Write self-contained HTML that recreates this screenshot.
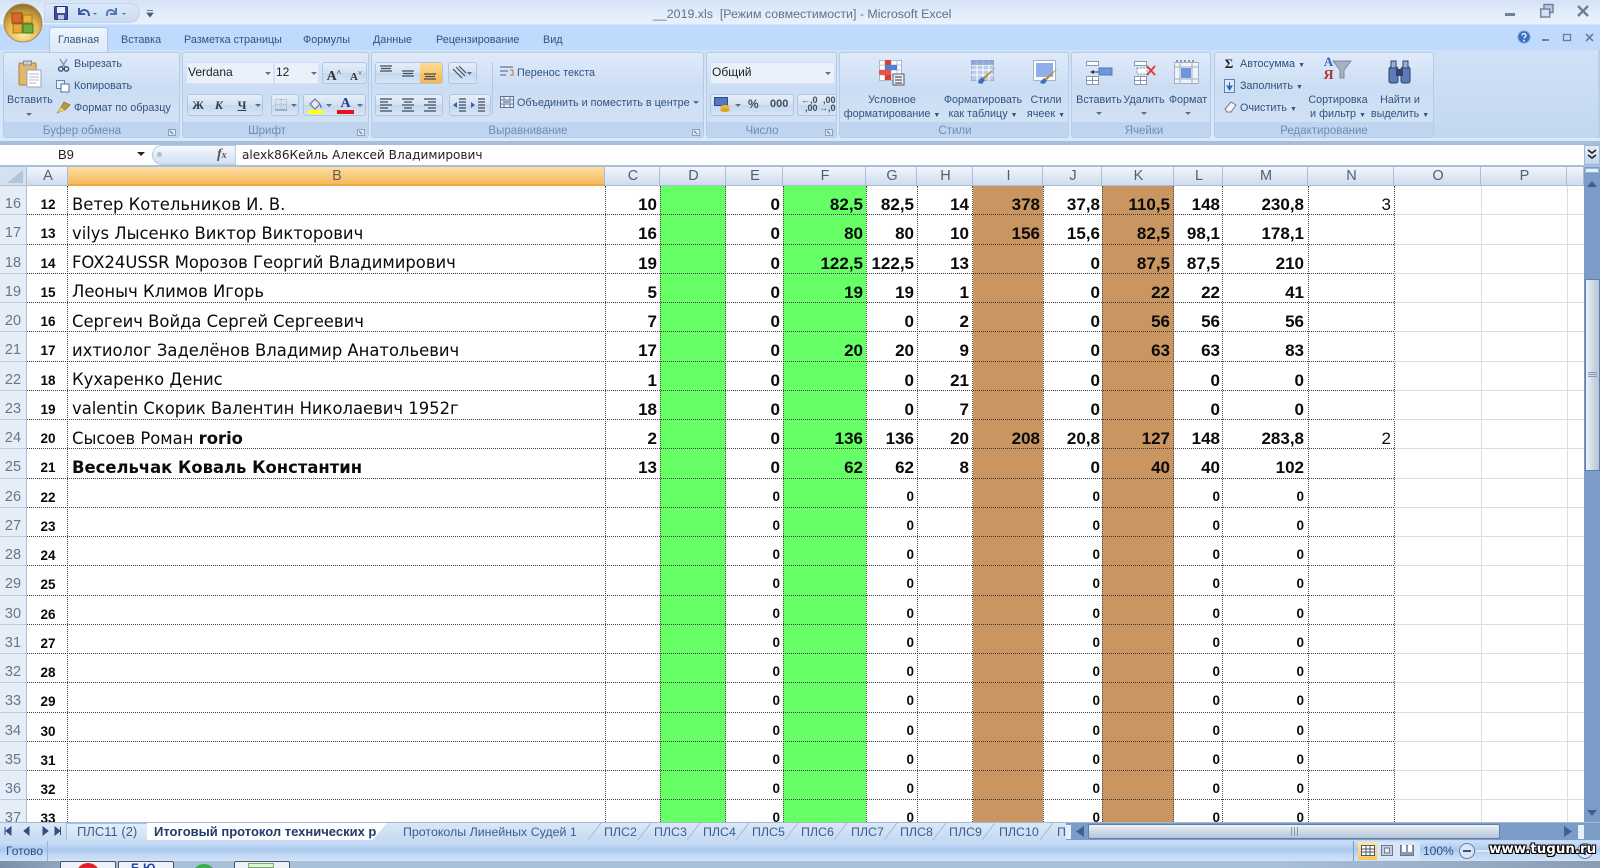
<!DOCTYPE html>
<html lang="ru"><head><meta charset="utf-8"><title>Microsoft Excel</title>
<style>
html,body{margin:0;padding:0;width:1600px;height:868px;overflow:hidden;background:#fff}
#w{position:absolute;left:0;top:0;width:1600px;height:868px;overflow:hidden;filter:blur(.35px);font-family:"Liberation Sans",sans-serif}
.t{position:absolute;white-space:nowrap;font-size:10.8px;line-height:14px;color:#33527f}
.c{transform:translateX(-50%)}
.lb{color:#6d8db8;font-size:11.5px;top:124px}
.g{position:absolute;top:52px;height:86px;box-sizing:border-box;border:1px solid #b4cbe6;border-radius:3px;background:linear-gradient(#dfeafa 0,#d3e3f6 25%,#cbddf3 40%,#d2e2f5 85%,#d2e2f5 86%)}
.g:after{content:"";position:absolute;left:0;right:0;bottom:0;height:15px;background:#bfd5ef}
.b{position:absolute;box-sizing:border-box;border:1px solid #aec6e2;border-radius:3px;background:linear-gradient(#e6eef9,#d3e1f3 50%,#c6d8ef 51%,#d6e4f5)}
.w{position:absolute;box-sizing:border-box;background:#eaf1fb;border:1px solid #d3e1f2}
svg{position:absolute;overflow:visible}
.gly{position:absolute;font-weight:bold;color:#2a3a55;text-align:center;line-height:20px;font-size:13px}
.ch{position:absolute;top:167px;height:19px;box-sizing:border-box;padding-left:2px;border-right:1px solid #a9bfd9;background:linear-gradient(#f3f6fb,#dde6f2 60%,#cfdcec);text-align:center;color:#4f5e74;font-size:14.5px;line-height:19px;border-bottom:1px solid #a9bfd9}
#grid{position:absolute;left:0;top:186px;width:1584px;height:636px;overflow:hidden;background:#fff}
.st{position:absolute;top:0;height:636px}
.v{position:absolute;top:0;height:636px;border-left:1px dotted #4d4d4d}
.l{position:absolute;top:0;height:636px;border-left:1px solid #d6deea}
.r{position:absolute;left:0;width:1584px;height:29.25px;font-weight:bold;color:#0a0a0a;font-size:17px;line-height:37px}
.r:before{content:"";position:absolute;left:27px;width:1367px;bottom:0;border-bottom:1px dotted #3c3c3c}
.r:after{content:"";position:absolute;left:1394px;width:190px;bottom:0;border-bottom:1px solid #d6deea}
.r i{position:absolute;font-style:normal;top:0;white-space:nowrap}
.r u{position:absolute;left:0;top:0;width:27px;height:29.25px;box-sizing:border-box;background:#e6edf7;border-right:1px solid #a9bfd9;border-bottom:1px solid #b8cce2;text-decoration:none;text-align:center;font-weight:normal;font-size:14.5px;color:#66768c;line-height:37px}
.r s{position:absolute;left:28px;width:40px;text-align:center;text-decoration:none;font-size:13.5px;top:0}
.r em{position:absolute;left:72px;font-style:normal;font-family:"DejaVu Sans",sans-serif;font-weight:normal;font-size:16.4px;top:-.5px;white-space:nowrap}
.r em b{font-weight:bold}
.C{right:927px}.E{right:804px}.F{right:721px}.G{right:670px}.H{right:615px}.I{right:544px}.J{right:484px}.K{right:414px}.L{right:364px}.M{right:280px}.N{right:193px}
.z i{font-size:13.5px;top:-1px}
.tab{position:absolute;top:824px;font-size:12.4px;line-height:16px;color:#3a5d90;white-space:nowrap}
</style></head><body><div id="w">

<!-- title bar -->
<div style="position:absolute;left:0;top:0;width:1600px;height:24px;background:linear-gradient(#d3e2f6,#e4eefa 60%,#e9f1fb)"></div>
<div style="position:absolute;left:0;top:24px;width:1600px;height:28px;background:#bfdafc;border-top:1px solid #d2e6fb;box-sizing:border-box"></div>
<div style="position:absolute;left:0;top:50px;width:1600px;height:94px;background:linear-gradient(#cfe1f7,#dbe8f8)"></div>
<div style="position:absolute;left:0;top:141px;width:1600px;height:4px;background:#a7bfdc"></div>
<div style="position:absolute;left:44px;top:3px;width:96px;height:20px;border-radius:0 12px 12px 0;background:linear-gradient(#dce8f8,#c9dcf3);border:1px solid #c3d6ee;box-sizing:border-box"></div>
<svg style="left:3px;top:3px" width="40" height="40" viewBox="0 0 40 40"><defs><radialGradient id="o" cx=".5" cy=".75" r=".75"><stop offset="0" stop-color="#fff3b0"/><stop offset=".55" stop-color="#e6b54a"/><stop offset="1" stop-color="#8c6a2a"/></radialGradient></defs><circle cx="20" cy="20" r="19" fill="url(#o)" stroke="#9b8a5c"/><rect x="9" y="10" width="10" height="10" fill="#d8682a" stroke="#a63f12"/><rect x="20" y="12" width="9" height="8" fill="#e9b53c" stroke="#a07a1c"/><rect x="10" y="21" width="9" height="9" fill="#e8a73a" stroke="#a07a1c"/><rect x="20" y="21" width="10" height="9" fill="#6fae3f" stroke="#3f7a1c"/></svg>
<svg style="left:54px;top:6px" width="14" height="14" viewBox="0 0 14 14"><rect x=".5" y=".5" width="13" height="13" rx="1" fill="#3f4f9a" stroke="#2a3370"/><rect x="3" y="1" width="8" height="6" fill="#e8eefa"/><rect x="4" y="9" width="6" height="4.5" fill="#bcc5de"/></svg>
<svg style="left:76px;top:5px" width="60" height="16" viewBox="0 0 60 16" fill="none"><path d="M3 3v6h6M3 9c3-6 10-5 10 2" stroke="#3b5aa8" stroke-width="2"/><path d="M17 8l2 2 2-2z" fill="#5a6f8e"/><path d="M40 3v6h-6M40 9c-3-6-10-5-9 2" stroke="#3b5aa8" stroke-width="2" opacity=".8"/><path d="M46 8l2 2 2-2z" fill="#5a6f8e"/></svg>
<svg style="left:146px;top:9px" width="8" height="9"><path d="M1 1.5h6M1 4h6l-3 4z" fill="#4a5a70" stroke="#4a5a70" stroke-width=".8"/></svg>
<div class="t" style="left:653px;top:7px;font-size:12.4px;color:#5f7190">__2019.xls&nbsp; [Режим совместимости] - Microsoft Excel</div>
<div style="position:absolute;left:1505px;top:13px;width:10px;height:3px;background:#6d7f99"></div>
<svg style="left:1540px;top:4px" width="14" height="14"><rect x="4" y=".5" width="9" height="8" fill="#b9cbe2" stroke="#6d7f99" stroke-width="1.4"/><rect x=".7" y="5" width="9" height="8" fill="#d4e1f1" stroke="#6d7f99" stroke-width="1.4"/></svg>
<svg style="left:1577px;top:5px" width="12" height="12"><path d="M1 1l10 10M11 1L1 11" stroke="#6d7f99" stroke-width="2.4"/></svg>

<!-- tabs -->
<div style="position:absolute;left:49px;top:27px;width:59px;height:26px;box-sizing:border-box;background:linear-gradient(#eef5fd,#dbe8f8);border:1px solid #a9c5e6;border-bottom:0;border-radius:3px 3px 0 0"></div>
<div class="t" style="left:58px;top:33px">Главная</div><div class="t" style="left:121px;top:33px">Вставка</div><div class="t" style="left:184px;top:33px">Разметка страницы</div><div class="t" style="left:303px;top:33px">Формулы</div><div class="t" style="left:373px;top:33px">Данные</div><div class="t" style="left:436px;top:33px">Рецензирование</div><div class="t" style="left:543px;top:33px">Вид</div>
<svg style="left:1517px;top:30px" width="14" height="14"><circle cx="7" cy="7" r="6.2" fill="#3b70c4" stroke="#8fb3de"/><path d="M5 5.5c0-2.5 4-2.5 4 0 0 1.5-2 1.5-2 3" fill="none" stroke="#fff" stroke-width="1.3"/><rect x="6.3" y="9.8" width="1.6" height="1.6" fill="#fff"/></svg>
<div style="position:absolute;left:1542px;top:39px;width:7px;height:2px;background:#6d7f99"></div>
<svg style="left:1563px;top:33px" width="9" height="9"><rect x=".5" y="1.5" width="7" height="6" fill="none" stroke="#6d7f99" stroke-width="1.3"/></svg>
<svg style="left:1585px;top:33px" width="9" height="9"><path d="M1 1l7 7M8 1L1 8" stroke="#6d7f99" stroke-width="1.6"/></svg>

<!-- ribbon groups -->
<div class="g" style="left:3px;width:177px"></div>
<div class="g" style="left:182px;width:187px"></div>
<div class="g" style="left:371px;width:333px"></div>
<div class="g" style="left:706px;width:131px"></div>
<div class="g" style="left:839px;width:230px"></div>
<div class="g" style="left:1071px;width:140px"></div>
<div class="g" style="left:1214px;width:220px"></div>
<div style="position:absolute;left:1434px;top:50px;width:166px;height:88px;background:linear-gradient(#d0e1f6,#c2d7f0);border-right:2px solid #b8cfea;box-sizing:border-box"></div>

<!-- clipboard -->
<svg style="left:18px;top:60px" width="24" height="28" viewBox="0 0 24 28"><rect x="1" y="3" width="17" height="22" rx="1" fill="#e3b86c" stroke="#a98140"/><rect x="5.5" y="1" width="8" height="4" fill="#c9cdd4" stroke="#7f8a99"/><rect x="9" y="10" width="14" height="17" fill="#fff" stroke="#9aa6b8"/><path d="M11 14h10M11 17h10M11 20h10M11 23h7" stroke="#b4bfcd"/></svg>
<div class="t" style="left:7px;top:93px">Вставить</div>
<svg style="left:26px;top:113px" width="6" height="4"><path d="M0 0h6L3 3z" fill="#5a6f8e"/></svg>
<svg style="left:57px;top:58px" width="13" height="14"><path d="M3 1l5 8M10 1L5 9" stroke="#8494aa" stroke-width="1.4"/><circle cx="3.8" cy="11" r="2.2" fill="none" stroke="#3a4f80" stroke-width="1.4"/><circle cx="9.4" cy="11" r="2.2" fill="none" stroke="#3a4f80" stroke-width="1.4"/></svg>
<div class="t" style="left:74px;top:57px">Вырезать</div>
<svg style="left:56px;top:80px" width="14" height="13"><rect x=".5" y=".5" width="8" height="8" fill="#e8eef8" stroke="#6b82a6"/><rect x="5" y="4" width="8" height="8" fill="#fff" stroke="#4f6f9e"/></svg>
<div class="t" style="left:74px;top:79px">Копировать</div>
<svg style="left:56px;top:101px" width="15" height="13"><path d="M8 1l6 3-5 5-4-3z" fill="#c09a3c" stroke="#7c6020" stroke-width=".6"/><path d="M5 6L1 12l5-2 3-1z" fill="#f0d870" stroke="#a08a30" stroke-width=".6"/></svg>
<div class="t" style="left:74px;top:101px">Формат по образцу</div>
<div class="t lb c" style="left:82px">Буфер обмена</div>
<svg style="left:168px;top:129px" width="8" height="7"><rect x=".5" y=".5" width="7" height="6" fill="#dbe6f4" stroke="#8aa0bd"/><path d="M2 2l3 3" stroke="#5a6f8e"/></svg>

<!-- font -->
<div class="w" style="left:186px;top:62px;width:88px;height:22px"></div>
<div class="w" style="left:274px;top:62px;width:45px;height:22px"></div>
<div class="t" style="left:188px;top:65px;font-size:12px;color:#222">Verdana</div>
<div class="t" style="left:276px;top:65px;font-size:12px;color:#222">12</div>
<svg style="left:265px;top:72px" width="6" height="4"><path d="M0 0h6L3 3z" fill="#5a6f8e"/></svg>
<svg style="left:311px;top:72px" width="6" height="4"><path d="M0 0h6L3 3z" fill="#5a6f8e"/></svg>
<div class="b" style="left:322px;top:62px;width:45px;height:22px"></div>
<div class="gly" style="left:322px;top:63px;width:24px;font-family:'Liberation Serif',serif;font-size:14px;color:#333">A<span style="font-size:8px;vertical-align:5px">˄</span></div>
<div class="gly" style="left:346px;top:63px;width:20px;font-family:'Liberation Serif',serif;font-size:11px;color:#333">A<span style="font-size:7px;vertical-align:5px">˅</span></div>
<div class="b" style="left:187px;top:94px;width:76px;height:22px"></div>
<div class="gly" style="left:189px;top:95px;width:18px;font-family:'Liberation Serif',serif;font-size:12px">Ж</div>
<div class="gly" style="left:210px;top:95px;width:18px;font-family:'Liberation Serif',serif;font-size:12px;font-style:italic">К</div>
<div class="gly" style="left:233px;top:95px;width:18px;font-family:'Liberation Serif',serif;font-size:12px;text-decoration:underline">Ч</div>
<svg style="left:255px;top:104px" width="6" height="4"><path d="M0 0h6L3 3z" fill="#5a6f8e"/></svg>
<div class="b" style="left:271px;top:94px;width:28px;height:22px"></div>
<svg style="left:275px;top:99px" width="12" height="12"><rect x=".5" y=".5" width="11" height="10" fill="none" stroke="#a4b2c6" stroke-dasharray="1 1"/><path d="M6 0v11M0 5.5h11" stroke="#a4b2c6" stroke-dasharray="1 1"/><path d="M0 11h12" stroke="#7d8ba0"/></svg>
<svg style="left:291px;top:104px" width="6" height="4"><path d="M0 0h6L3 3z" fill="#5a6f8e"/></svg>
<div class="b" style="left:303px;top:94px;width:63px;height:22px"></div>
<svg style="left:307px;top:96px" width="17" height="18"><path d="M3 8l5-5 5 5-5 5z" fill="#e9eef6" stroke="#5a6a80"/><path d="M13 8c2 2 2 4 1 4s-1-2-1-4z" fill="#3a6fc4"/><rect x="1" y="14" width="15" height="4" fill="#ffff1a"/></svg>
<svg style="left:326px;top:104px" width="6" height="4"><path d="M0 0h6L3 3z" fill="#5a6f8e"/></svg>
<div class="gly" style="left:337px;top:94px;width:17px;color:#1f3f8a;font-size:14px;font-family:'Liberation Serif',serif">A</div>
<div style="position:absolute;left:337px;top:110px;width:17px;height:4px;background:#e8101a"></div>
<svg style="left:357px;top:104px" width="6" height="4"><path d="M0 0h6L3 3z" fill="#5a6f8e"/></svg>
<div class="t lb c" style="left:267px">Шрифт</div>
<svg style="left:357px;top:129px" width="8" height="7"><rect x=".5" y=".5" width="7" height="6" fill="#dbe6f4" stroke="#8aa0bd"/><path d="M2 2l3 3" stroke="#5a6f8e"/></svg>

<!-- alignment -->
<div class="b" style="left:375px;top:62px;width:68px;height:22px"></div>
<div style="position:absolute;left:420px;top:63px;width:22px;height:20px;background:linear-gradient(#fbdc96,#f7b44c)"></div>
<svg style="left:380px;top:65px" width="60" height="15"><path d="M0 1h12M1 3.5h10M0 6h12M22 6h12M23 8.5h10M22 11h12M44 9h12M45 11.5h10M44 14h12" stroke="#3f4c60" stroke-width="1.3"/></svg>
<div class="b" style="left:448px;top:62px;width:29px;height:22px"></div>
<svg style="left:452px;top:66px" width="20" height="14"><path d="M1 3l9 9M4 1l9 9M7 0l7 7" stroke="#444e60" stroke-width="1.2"/><path d="M15 6h5l-2.5 3z" fill="#5a6f8e"/></svg>
<div class="b" style="left:375px;top:94px;width:68px;height:22px"></div>
<svg style="left:380px;top:98px" width="60" height="14"><path d="M0 1h12M0 4h8M0 7h12M0 10h8M0 13h12M22 1h12M24 4h8M22 7h12M24 10h8M22 13h12M44 1h12M48 4h8M44 7h12M48 10h8M44 13h12" stroke="#3f4c60" stroke-width="1.2"/></svg>
<div class="b" style="left:449px;top:94px;width:42px;height:22px"></div>
<svg style="left:453px;top:98px" width="36" height="14"><path d="M6 1h7M6 4h7M6 7h7M6 10h7M6 13h7M25 1h7M25 4h7M25 7h7M25 10h7M25 13h7" stroke="#3f4c60" stroke-width="1.2"/><path d="M0 7l4-3v6zM22 7l-4-3v6z" fill="#3562b4"/></svg>
<div style="position:absolute;left:492px;top:62px;width:1px;height:52px;background:#b3c8e2"></div>
<svg style="left:500px;top:65px" width="14" height="13"><path d="M0 1h13v2H0zM0 5h8v2H0zM0 9h6v2H0z" fill="#8fa0b8"/><path d="M10 5h3v5h-3" fill="none" stroke="#c47a2a"/></svg>
<div class="t" style="left:517px;top:66px">Перенос текста</div>
<svg style="left:500px;top:96px" width="14" height="12"><rect x=".5" y=".5" width="13" height="11" fill="#eef3fa" stroke="#5d7291"/><path d="M0 4h14M0 8h14M4 0v4M4 8v4M10 0v4M10 8v4" stroke="#5d7291"/><path d="M3 6h8" stroke="#2a4fa0"/></svg>
<div class="t" style="left:517px;top:96px">Объединить и поместить в центре</div>
<svg style="left:693px;top:101px" width="6" height="4"><path d="M0 0h6L3 3z" fill="#5a6f8e"/></svg>
<div class="t lb c" style="left:528px">Выравнивание</div>
<svg style="left:692px;top:129px" width="8" height="7"><rect x=".5" y=".5" width="7" height="6" fill="#dbe6f4" stroke="#8aa0bd"/><path d="M2 2l3 3" stroke="#5a6f8e"/></svg>

<!-- number -->
<div class="w" style="left:710px;top:62px;width:125px;height:22px"></div>
<div class="t" style="left:712px;top:65px;font-size:12px;color:#222">Общий</div>
<svg style="left:825px;top:72px" width="6" height="4"><path d="M0 0h6L3 3z" fill="#5a6f8e"/></svg>
<div class="b" style="left:710px;top:94px;width:84px;height:22px"></div>
<svg style="left:714px;top:97px" width="17" height="15"><rect x=".5" y=".5" width="13" height="8" fill="#5478c0" stroke="#2f4a8a"/><ellipse cx="11" cy="10" rx="5" ry="2" fill="#e9b73c"/><ellipse cx="11" cy="13" rx="5" ry="2" fill="#d9a52c"/></svg>
<svg style="left:735px;top:104px" width="6" height="4"><path d="M0 0h6L3 3z" fill="#5a6f8e"/></svg>
<div class="t" style="left:748px;top:97px;font-weight:bold;color:#3f4c60;font-size:12px">%</div>
<div class="t" style="left:770px;top:97px;font-weight:bold;color:#3f4c60;font-size:11px">000</div>
<div class="b" style="left:797px;top:94px;width:40px;height:22px"></div>
<div class="t" style="left:801px;top:96px;font-weight:bold;color:#3f4c60;font-size:9px;line-height:8px;text-align:right">←,0<br>,00</div>
<div class="t" style="left:819px;top:96px;font-weight:bold;color:#3f4c60;font-size:9px;line-height:8px;text-align:right">,00<br>→,0</div>
<div class="t lb c" style="left:762px">Число</div>
<svg style="left:825px;top:129px" width="8" height="7"><rect x=".5" y=".5" width="7" height="6" fill="#dbe6f4" stroke="#8aa0bd"/><path d="M2 2l3 3" stroke="#5a6f8e"/></svg>

<!-- styles -->
<svg style="left:879px;top:60px" width="26" height="25"><rect x=".5" y=".5" width="22" height="20" fill="#fff" stroke="#aab6c6"/><path d="M6 0v21M12 0v21M18 0v21M0 5h23M0 10h23M0 15h23" stroke="#b9c5d4"/><rect x="6" y="0" width="6" height="5" fill="#e03a2a"/><rect x="6" y="5" width="12" height="5" fill="#4f7fd8"/><rect x="0" y="10" width="12" height="5" fill="#e8544a"/><rect x="6" y="15" width="6" height="5" fill="#e03a2a"/><rect x="14" y="14" width="11" height="11" fill="#eef2f8" stroke="#4a5a70"/><path d="M16 17h7M16 20h7M16 23h7" stroke="#333"/></svg>
<svg style="left:971px;top:60px" width="26" height="25"><rect x=".5" y=".5" width="22" height="20" fill="#b9cdea" stroke="#9fb0c8"/><path d="M6 0v21M12 0v21M18 0v21M0 5h23M0 10h23M0 15h23" stroke="#fff"/><rect x="0" y="0" width="23" height="5" fill="#7d9ad0" opacity=".7"/><path d="M25 7L14 19l-3-1z" fill="#c08a40"/><path d="M8 20l3-3 3 3-3 4-4-1z" fill="#3f6ec0"/></svg>
<svg style="left:1033px;top:60px" width="26" height="25"><rect x=".5" y=".5" width="22" height="20" fill="#fff" stroke="#a4b4ca"/><rect x="3" y="3" width="17" height="14" fill="#8eaeec"/><path d="M25 8L14 20l-3-1z" fill="#c08a40"/><path d="M8 21l3-3 3 3-3 3-4-1z" fill="#3f6ec0"/></svg>
<div class="t c" style="left:892px;top:93px">Условное</div>
<div class="t c" style="left:892px;top:107px">форматирование&nbsp;<span style="font-size:7px">▼</span></div>
<div class="t c" style="left:983px;top:93px">Форматировать</div>
<div class="t c" style="left:983px;top:107px">как таблицу&nbsp;<span style="font-size:7px">▼</span></div>
<div class="t c" style="left:1046px;top:93px">Стили</div>
<div class="t c" style="left:1046px;top:107px">ячеек&nbsp;<span style="font-size:7px">▼</span></div>
<div class="t lb c" style="left:955px">Стили</div>

<!-- cells -->
<svg style="left:1086px;top:61px" width="28" height="24"><rect x=".5" y=".5" width="12" height="4" fill="#fff" stroke="#8a99ad"/><rect x=".5" y="15.5" width="12" height="8" fill="#fff" stroke="#8a99ad"/><path d="M6.5 15v8M0 19.5h13" stroke="#8a99ad"/><path d="M8 9l-4 2 4 2z" fill="#333"/><path d="M6 11h7" stroke="#333"/><rect x="13" y="7" width="13" height="7" fill="#6f96dc" stroke="#4f78c0"/></svg>
<svg style="left:1134px;top:61px" width="24" height="24"><rect x=".5" y=".5" width="12" height="4" fill="#fff" stroke="#8a99ad"/><rect x=".5" y="15.5" width="12" height="8" fill="#fff" stroke="#8a99ad"/><path d="M6.5 15v8M0 19.5h13" stroke="#8a99ad"/><rect x="3" y="7" width="10" height="6" fill="#fff" stroke="#8a99ad" stroke-dasharray="2 1"/><path d="M13 5l8 9M21 5l-8 9" stroke="#e0392a" stroke-width="1.8"/></svg>
<svg style="left:1174px;top:60px" width="26" height="26"><rect x=".5" y="2.5" width="24" height="21" fill="#eef3f8" stroke="#a4b0c0"/><path d="M6 2v21M18 2v21M0 7h25M0 19h25" stroke="#a4b0c0"/><rect x="7" y="8" width="10" height="10" fill="#6f96dc"/><path d="M2 1h20" stroke="#444" stroke-dasharray="2 2"/></svg>
<div class="t c" style="left:1099px;top:93px">Вставить</div>
<div class="t c" style="left:1144px;top:93px">Удалить</div>
<div class="t c" style="left:1188px;top:93px">Формат</div>
<svg style="left:1096px;top:112px" width="6" height="4"><path d="M0 0h6L3 3z" fill="#5a6f8e"/></svg>
<svg style="left:1141px;top:112px" width="6" height="4"><path d="M0 0h6L3 3z" fill="#5a6f8e"/></svg>
<svg style="left:1185px;top:112px" width="6" height="4"><path d="M0 0h6L3 3z" fill="#5a6f8e"/></svg>
<div class="t lb c" style="left:1144px">Ячейки</div>

<!-- editing -->
<div class="gly" style="left:1222px;top:54px;width:14px;font-family:'Liberation Serif',serif;font-size:13px;color:#222">Σ</div>
<div class="t" style="left:1240px;top:57px">Автосумма&nbsp;<span style="font-size:7px">▼</span></div>
<svg style="left:1224px;top:79px" width="11" height="14"><rect x=".5" y=".5" width="10" height="13" fill="#dfe9f6" stroke="#5a7fb8"/><path d="M5.5 3v5M3 7l2.5 4L8 7z" fill="#2f62c0" stroke="#2f62c0"/></svg>
<div class="t" style="left:1240px;top:79px">Заполнить&nbsp;<span style="font-size:7px">▼</span></div>
<svg style="left:1224px;top:101px" width="13" height="12"><path d="M1 8l6-7 5 3-5 7H3z" fill="#f2f4f8" stroke="#6f7d90"/></svg>
<div class="t" style="left:1240px;top:101px">Очистить&nbsp;<span style="font-size:7px">▼</span></div>
<svg style="left:1324px;top:58px" width="28" height="28"><path d="M9 3h18l-7 9v8h-4v-8z" fill="#a7b2c0" stroke="#7d8a9a"/></svg>
<div class="gly" style="left:1322px;top:52px;width:13px;color:#3b5fb4;font-family:'Liberation Serif',serif;font-size:13px">A</div>
<div class="gly" style="left:1322px;top:66px;width:13px;color:#a83a32;font-family:'Liberation Serif',serif;font-size:14px">Я</div>
<svg style="left:1387px;top:59px" width="26" height="26"><rect x="2" y="8" width="9" height="16" rx="2" fill="#5c7cb8" stroke="#2d3f70"/><rect x="14" y="8" width="9" height="16" rx="2" fill="#5c7cb8" stroke="#2d3f70"/><rect x="4" y="2" width="5" height="7" fill="#9ab0d8" stroke="#2d3f70"/><rect x="16" y="2" width="5" height="7" fill="#9ab0d8" stroke="#2d3f70"/><rect x="9" y="10" width="7" height="7" fill="#33436e"/></svg>
<div class="t c" style="left:1338px;top:93px">Сортировка</div>
<div class="t c" style="left:1338px;top:107px">и фильтр&nbsp;<span style="font-size:7px">▼</span></div>
<div class="t c" style="left:1400px;top:93px">Найти и</div>
<div class="t c" style="left:1400px;top:107px">выделить&nbsp;<span style="font-size:7px">▼</span></div>
<div class="t lb c" style="left:1324px">Редактирование</div>

<!-- formula bar -->
<div style="position:absolute;left:0;top:145px;width:1600px;height:20px;background:#fff"></div>
<div style="position:absolute;left:0;top:165px;width:1600px;height:2px;background:#a9bfd9"></div>
<div class="t" style="left:58px;top:147px;font-size:13px;color:#222;line-height:16px">B9</div>
<svg style="left:137px;top:152px" width="8" height="5"><path d="M0 0h8L4 4z" fill="#222"/></svg>
<div style="position:absolute;left:152px;top:145px;width:83px;height:20px;box-sizing:border-box;border-radius:10px 0 0 10px;background:linear-gradient(#f6f9fd,#cfdff2);border:1px solid #b6cbe4;border-right:0"></div>
<div style="position:absolute;left:157px;top:152px;width:5px;height:5px;border-radius:3px;background:#b4bfcc"></div>
<div class="t" style="left:217px;top:147px;font-family:'Liberation Serif',serif;font-style:italic;font-size:14px;color:#555;line-height:16px;font-weight:bold">f<span style="font-size:10px">x</span></div>
<div style="position:absolute;left:235px;top:145px;width:1px;height:20px;background:#b6cbe4"></div>
<div class="t" style="left:242px;top:147px;font-family:'DejaVu Sans',sans-serif;font-size:12.1px;color:#222;line-height:16px">alexk86Кейль Алексей Владимирович</div>
<div style="position:absolute;left:1584px;top:145px;width:16px;height:20px;box-sizing:border-box;background:linear-gradient(#e6eef9,#c4d7ef);border:1px solid #9db6d4"></div>
<svg style="left:1587px;top:150px" width="10" height="10"><path d="M1 0l4 3 4-3M1 5l4 3 4-3" fill="none" stroke="#222" stroke-width="1.6"/></svg>

<!-- column headers -->
<div class="ch" style="left:0;width:27px;background:#d5e1f0"></div>
<svg style="left:7px;top:170px" width="17" height="13"><path d="M16 0v13H0z" fill="#b2c4da"/></svg>
<div class="ch" style="left:27px;width:41px">A</div>
<div class="ch" style="left:68px;width:537px;background:linear-gradient(#fbdfa4,#f8c777 60%,#f5b95d);border-bottom:2px solid #f0a63c;color:#6b6049">B</div>
<div class="ch" style="left:605px;width:55px">C</div><div class="ch" style="left:660px;width:66px">D</div><div class="ch" style="left:726px;width:57px">E</div><div class="ch" style="left:783px;width:83px">F</div><div class="ch" style="left:866px;width:51px">G</div><div class="ch" style="left:917px;width:56px">H</div><div class="ch" style="left:973px;width:70px">I</div><div class="ch" style="left:1043px;width:59px">J</div><div class="ch" style="left:1102px;width:72px">K</div><div class="ch" style="left:1174px;width:49px">L</div><div class="ch" style="left:1223px;width:85px">M</div><div class="ch" style="left:1308px;width:86px">N</div><div class="ch" style="left:1394px;width:87px">O</div><div class="ch" style="left:1481px;width:86px">P</div><div class="ch" style="left:1567px;width:17px"></div>

<!-- grid -->
<div id="grid">
<div class="st" style="left:660px;width:66px;background:#66ff66"></div>
<div class="st" style="left:783px;width:83px;background:#66ff66"></div>
<div class="st" style="left:973px;width:70px;background:#c99560"></div>
<div class="st" style="left:1102px;width:72px;background:#c99560"></div>
<div class="v" style="left:67px"></div><div class="v" style="left:605px"></div><div class="v" style="left:660px"></div><div class="v" style="left:725px"></div><div class="v" style="left:783px"></div><div class="v" style="left:866px"></div><div class="v" style="left:917px"></div><div class="v" style="left:972px"></div><div class="v" style="left:1043px"></div><div class="v" style="left:1102px"></div><div class="v" style="left:1173px"></div><div class="v" style="left:1222px"></div><div class="v" style="left:1308px"></div><div class="v" style="left:1394px"></div>
<div class="l" style="left:1481px"></div><div class="l" style="left:1567px"></div>

<div class="r" style="top:0"><u>16</u><s>12</s><em>Ветер Котельников И. В.</em><i class="C">10</i><i class="E">0</i><i class="F">82,5</i><i class="G">82,5</i><i class="H">14</i><i class="I">378</i><i class="J">37,8</i><i class="K">110,5</i><i class="L">148</i><i class="M">230,8</i><i class="N" style="font-weight:normal">3</i></div>
<div class="r" style="top:29.25px"><u>17</u><s>13</s><em>vilys Лысенко Виктор Викторович</em><i class="C">16</i><i class="E">0</i><i class="F">80</i><i class="G">80</i><i class="H">10</i><i class="I">156</i><i class="J">15,6</i><i class="K">82,5</i><i class="L">98,1</i><i class="M">178,1</i></div>
<div class="r" style="top:58.5px"><u>18</u><s>14</s><em>FOX24USSR Морозов Георгий Владимирович</em><i class="C">19</i><i class="E">0</i><i class="F">122,5</i><i class="G">122,5</i><i class="H">13</i><i class="J">0</i><i class="K">87,5</i><i class="L">87,5</i><i class="M">210</i></div>
<div class="r" style="top:87.75px"><u>19</u><s>15</s><em>Леоныч Климов Игорь</em><i class="C">5</i><i class="E">0</i><i class="F">19</i><i class="G">19</i><i class="H">1</i><i class="J">0</i><i class="K">22</i><i class="L">22</i><i class="M">41</i></div>
<div class="r" style="top:117px"><u>20</u><s>16</s><em>Сергеич Войда Сергей Сергеевич</em><i class="C">7</i><i class="E">0</i><i class="G">0</i><i class="H">2</i><i class="J">0</i><i class="K">56</i><i class="L">56</i><i class="M">56</i></div>
<div class="r" style="top:146.25px"><u>21</u><s>17</s><em>ихтиолог Заделёнов Владимир Анатольевич</em><i class="C">17</i><i class="E">0</i><i class="F">20</i><i class="G">20</i><i class="H">9</i><i class="J">0</i><i class="K">63</i><i class="L">63</i><i class="M">83</i></div>
<div class="r" style="top:175.5px"><u>22</u><s>18</s><em>Кухаренко Денис</em><i class="C">1</i><i class="E">0</i><i class="G">0</i><i class="H">21</i><i class="J">0</i><i class="L">0</i><i class="M">0</i></div>
<div class="r" style="top:204.75px"><u>23</u><s>19</s><em>valentin Скорик Валентин Николаевич 1952г</em><i class="C">18</i><i class="E">0</i><i class="G">0</i><i class="H">7</i><i class="J">0</i><i class="L">0</i><i class="M">0</i></div>
<div class="r" style="top:234px"><u>24</u><s>20</s><em>Сысоев Роман <b>rorio</b></em><i class="C">2</i><i class="E">0</i><i class="F">136</i><i class="G">136</i><i class="H">20</i><i class="I">208</i><i class="J">20,8</i><i class="K">127</i><i class="L">148</i><i class="M">283,8</i><i class="N" style="font-weight:normal">2</i></div>
<div class="r" style="top:263.25px"><u>25</u><s>21</s><em><b>Весельчак Коваль Константин</b></em><i class="C">13</i><i class="E">0</i><i class="F">62</i><i class="G">62</i><i class="H">8</i><i class="J">0</i><i class="K">40</i><i class="L">40</i><i class="M">102</i></div>
<div class="r z" style="top:292.5px"><u>26</u><s>22</s><i class="E">0</i><i class="G">0</i><i class="J">0</i><i class="L">0</i><i class="M">0</i></div>
<div class="r z" style="top:321.75px"><u>27</u><s>23</s><i class="E">0</i><i class="G">0</i><i class="J">0</i><i class="L">0</i><i class="M">0</i></div>
<div class="r z" style="top:351px"><u>28</u><s>24</s><i class="E">0</i><i class="G">0</i><i class="J">0</i><i class="L">0</i><i class="M">0</i></div>
<div class="r z" style="top:380.25px"><u>29</u><s>25</s><i class="E">0</i><i class="G">0</i><i class="J">0</i><i class="L">0</i><i class="M">0</i></div>
<div class="r z" style="top:409.5px"><u>30</u><s>26</s><i class="E">0</i><i class="G">0</i><i class="J">0</i><i class="L">0</i><i class="M">0</i></div>
<div class="r z" style="top:438.75px"><u>31</u><s>27</s><i class="E">0</i><i class="G">0</i><i class="J">0</i><i class="L">0</i><i class="M">0</i></div>
<div class="r z" style="top:468px"><u>32</u><s>28</s><i class="E">0</i><i class="G">0</i><i class="J">0</i><i class="L">0</i><i class="M">0</i></div>
<div class="r z" style="top:497.25px"><u>33</u><s>29</s><i class="E">0</i><i class="G">0</i><i class="J">0</i><i class="L">0</i><i class="M">0</i></div>
<div class="r z" style="top:526.5px"><u>34</u><s>30</s><i class="E">0</i><i class="G">0</i><i class="J">0</i><i class="L">0</i><i class="M">0</i></div>
<div class="r z" style="top:555.75px"><u>35</u><s>31</s><i class="E">0</i><i class="G">0</i><i class="J">0</i><i class="L">0</i><i class="M">0</i></div>
<div class="r z" style="top:585px"><u>36</u><s>32</s><i class="E">0</i><i class="G">0</i><i class="J">0</i><i class="L">0</i><i class="M">0</i></div>
<div class="r z" style="top:614.25px"><u>37</u><s>33</s><i class="E">0</i><i class="G">0</i><i class="J">0</i><i class="L">0</i><i class="M">0</i></div>
</div>

<!-- vertical scrollbar -->
<div style="position:absolute;left:1584px;top:167px;width:16px;height:655px;background:#7c9cc8"></div>
<div style="position:absolute;left:1585px;top:168px;width:14px;height:5px;background:#e6eef8;border:1px solid #9db6d4;box-sizing:border-box"></div>
<svg style="left:1587px;top:181px" width="10" height="6"><path d="M0 6h10L5 0z" fill="#3f5f90"/></svg>
<div style="position:absolute;left:1585px;top:279px;width:15px;height:192px;box-sizing:border-box;background:linear-gradient(90deg,#eef2f8,#cfd9e6 50%,#b6c4d8);border:1px solid #5f7ea8"></div>
<svg style="left:1588px;top:372px" width="9" height="6"><path d="M0 .5h9M0 2.5h9M0 4.5h9" stroke="#8898ae"/></svg>
<svg style="left:1587px;top:810px" width="10" height="6"><path d="M0 0h10L5 6z" fill="#3f5f90"/></svg>

<!-- sheet tabs -->
<div style="position:absolute;left:0;top:822px;width:1600px;height:19px;background:linear-gradient(#dbe7f6,#c6daf2);border-top:1px solid #a3bad6;box-sizing:border-box"></div>
<svg style="left:5px;top:826px" width="56" height="10"><path d="M6 1L1 5l5 4zM0 1v8" fill="#2f4f80" stroke="#2f4f80"/><path d="M24 1l-5 4 5 4zM38 1l5 4-5 4zM50 1l5 4-5 4zM55.500 1v8" fill="#2f4f80" stroke="#2f4f80"/></svg>
<div style="position:absolute;left:66px;top:823px;width:82px;height:17px;box-sizing:border-box;border:1px solid #a9c0dc;border-bottom:0;background:linear-gradient(#e3edf9,#cfe0f4)"></div>
<div style="position:absolute;left:147px;top:823px;width:240px;height:17px;background:#fff;clip-path:polygon(0 0,100% 0,94% 100%,0 100%)"></div>
<div class="tab" style="left:77px;font-size:13px">ПЛС11 (2)</div>
<div class="tab" style="left:154px;font-weight:bold;color:#1f3c6c;font-size:13px">Итоговый протокол технических р</div>
<div class="tab" style="left:403px">Протоколы Линейных Судей 1</div>
<div class="tab" style="left:604px">ПЛС2</div><div class="tab" style="left:654px">ПЛС3</div><div class="tab" style="left:703px">ПЛС4</div><div class="tab" style="left:752px">ПЛС5</div><div class="tab" style="left:801px">ПЛС6</div><div class="tab" style="left:851px">ПЛС7</div><div class="tab" style="left:900px">ПЛС8</div><div class="tab" style="left:949px">ПЛС9</div><div class="tab" style="left:999px">ПЛС10</div><div class="tab" style="left:1057px">П</div>
<svg style="left:580px;top:823px" width="490" height="17" fill="none" stroke="#a3bad6"><path d="M8 17L21 0M58 17L71 0M107 17L120 0M156 17L169 0M205 17L218 0M254 17L267 0M304 17L317 0M353 17L366 0M402 17L415 0M460 17L473 0"/></svg>
<div style="position:absolute;left:1066px;top:823px;width:534px;height:17px;background:#7c9cc8"></div>
<div style="position:absolute;left:1066px;top:825px;width:5px;height:14px;background:#e6eef8"></div>
<svg style="left:1076px;top:826px" width="8" height="11"><path d="M8 0v11L0 5.500z" fill="#3f5f90"/></svg>
<div style="position:absolute;left:1088px;top:824px;width:412px;height:15px;box-sizing:border-box;background:linear-gradient(#eff3f8,#cfd9e6 50%,#b6c4d8);border:1px solid #5f7ea8;border-radius:2px"></div>
<svg style="left:1291px;top:827px" width="7" height="9"><path d="M.5 0v9M3.500 0v9M6.500 0v9" stroke="#8898ae"/></svg>
<svg style="left:1564px;top:826px" width="8" height="11"><path d="M0 0v11L8 5.500z" fill="#3f5f90"/></svg>
<div style="position:absolute;left:1578px;top:825px;width:6px;height:14px;background:#e6eef8"></div>

<!-- status bar -->
<div style="position:absolute;left:0;top:841px;width:1600px;height:20px;background:linear-gradient(#cfe0f6,#a9c8ef 45%,#bcd4f2 60%,#d3e3f7)"></div>
<div class="t" style="left:6px;top:844px;font-size:12px;color:#2e4f7e">Готово</div>
<div style="position:absolute;left:47px;top:841px;width:1px;height:20px;background:#9ab4d6"></div>
<div style="position:absolute;left:1353px;top:841px;width:1px;height:20px;background:#7a98c0"></div>
<div style="position:absolute;left:1358px;top:842px;width:62px;height:18px;background:#d8e6f7;border-radius:2px"></div>
<div style="position:absolute;left:1358px;top:842px;width:19px;height:18px;background:linear-gradient(#fde6a8,#f8c65e)"></div>
<svg style="left:1361px;top:845px" width="56" height="12"><rect x=".5" y=".5" width="13" height="10" fill="#fff" stroke="#4a5a70"/><path d="M5 0v11M9 0v11M0 4h14M0 7h14" stroke="#4a5a70"/><rect x="20.500" y=".5" width="11" height="10" fill="#c6cfdb" stroke="#6a7a90"/><rect x="23.500" y="3" width="5" height="5" fill="#e8edf3" stroke="#6a7a90"/><rect x="39.500" y=".5" width="13" height="10" fill="#8a99ad" stroke="#6a7a90"/><rect x="41" y="0" width="4" height="7" fill="#fff"/><rect x="47" y="0" width="4" height="7" fill="#fff"/></svg>
<div class="t" style="left:1423px;top:844px;font-size:12px;color:#2e4f7e">100%</div>
<svg style="left:1458px;top:842px" width="18" height="18"><circle cx="9" cy="9" r="7.500" fill="#dbe7f6" stroke="#5f7ea8"/><path d="M5 9h8" stroke="#3a5480" stroke-width="2"/></svg>
<div style="position:absolute;left:1476px;top:850px;width:110px;height:2px;background:#dfe9f6"></div>
<svg style="left:1576px;top:842px" width="18" height="18"><circle cx="9" cy="9" r="7.500" fill="#dbe7f6" stroke="#5f7ea8"/><path d="M5 9h8M9 5v8" stroke="#3a5480" stroke-width="2"/></svg>
<div class="t" style="left:1489px;top:842px;font-size:13.4px;line-height:16px;font-weight:bold;font-family:'DejaVu Sans',sans-serif;color:#fff;text-shadow:1px 0 #000,-1px 0 #000,0 1px #000,0 -1px #000,1px 1px #000,-1px -1px #000,1px -1px #000,-1px 1px #000">www.tugun.ru</div>

<!-- taskbar -->
<div style="position:absolute;left:0;top:861px;width:1600px;height:7px;background:linear-gradient(90deg,#7a8ea8 0,#a9c0d9 8%,#a9c0da 60%,#a9c0da 80%,#8a9cb4)"></div>
<div style="position:absolute;left:60px;top:861px;width:56px;height:7px;background:#eef2f8;border:1px solid #46566e;border-bottom:0;box-sizing:border-box;border-radius:2px 2px 0 0"></div>
<div style="position:absolute;left:76px;top:863px;width:24px;height:24px;border-radius:12px;background:#e0202a"></div>
<div style="position:absolute;left:118px;top:861px;width:56px;height:7px;background:#eef2f8;border:1px solid #46566e;border-bottom:0;box-sizing:border-box;border-radius:2px 2px 0 0"></div>
<div class="t" style="left:131px;top:861px;font-weight:bold;color:#1f3fa0;font-size:12px">Б Ю</div>
<div style="position:absolute;left:192px;top:864px;width:24px;height:24px;border-radius:12px;background:#3bb04a"></div>
<div style="position:absolute;left:234px;top:861px;width:56px;height:7px;background:#eef2f8;border:1px solid #46566e;border-bottom:0;box-sizing:border-box;border-radius:2px 2px 0 0"></div>
<div style="position:absolute;left:248px;top:863px;width:26px;height:5px;background:#dff0d8;border:1px solid #7cae6a;box-sizing:border-box"></div>
</div></body></html>
